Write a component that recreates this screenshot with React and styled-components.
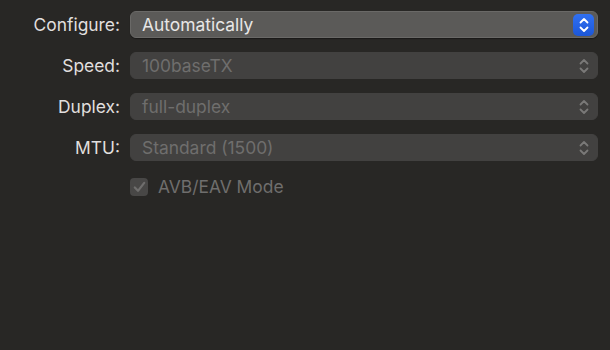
import React from "react";
import styled, { createGlobalStyle } from "styled-components";

const Global = createGlobalStyle`
  html, body { margin: 0; padding: 0; background: #282725; }
  body { width: 610px; height: 350px; overflow: hidden; font-family: Inter, "Liberation Sans", sans-serif; }
`;

const Page = styled.div`
  width: 610px;
  height: 350px;
  box-sizing: border-box;
  padding: 11px 12px 0 0;
  background: #282725;
`;

const Form = styled.div`
  display: grid;
  grid-template-columns: 120px 1fr;
  column-gap: 10px;
  row-gap: 14px;
  align-items: center;
`;

const Label = styled.div`
  text-align: right;
  font-size: 17.4px;
  color: #e0dfde;
  line-height: 27px;
  white-space: nowrap;
`;

const Popup = styled.div`
  height: 27px;
  box-sizing: border-box;
  border-radius: 6px;
  display: flex;
  align-items: center;
  padding: 0 3px 0 11px;
  font-size: 17.4px;
  background: ${p => (p.$enabled ? "#5b5a58" : "#424140")};
  border: 1px solid ${p => (p.$enabled ? "#6a6967" : "#424140")};
  color: ${p => (p.$enabled ? "#e8e7e6" : "#6f6e6d")};
  box-shadow: ${p => (p.$enabled ? "0 1px 1px rgba(0,0,0,0.35)" : "none")};
`;

const Value = styled.span`
  flex: 1;
  white-space: nowrap;
`;

const Stepper = styled.div`
  width: 21px;
  height: 22px;
  border-radius: 5px;
  display: flex;
  align-items: center;
  justify-content: center;
  background: ${p => (p.$enabled ? "linear-gradient(#3070f2, #1c57d8)" : "transparent")};
  color: ${p => (p.$enabled ? "#ffffff" : "#7a7978")};
`;

const CheckRow = styled.div`
  grid-column: 2;
  display: flex;
  align-items: center;
  gap: 10px;
  margin-top: 1px;
  font-size: 17.4px;
  color: #6f6e6d;
`;

const Box = styled.div`
  width: 18px;
  height: 18px;
  border-radius: 4px;
  background: #484746;
  display: flex;
  align-items: center;
  justify-content: center;
`;

const Chevrons = () => (
  <svg width="10" height="16" viewBox="0 0 10 16" fill="none" stroke="currentColor" strokeWidth="1.8" strokeLinecap="round" strokeLinejoin="round">
    <path d="M1.5 5.5 L5 2 L8.5 5.5" />
    <path d="M1.5 10.5 L5 14 L8.5 10.5" />
  </svg>
);

const Check = () => (
  <svg width="13" height="12" viewBox="0 0 13 12" fill="none" stroke="#6f6e6d" strokeWidth="2.2" strokeLinecap="round" strokeLinejoin="round">
    <path d="M1.8 6.5 L5 9.8 L11.2 1.8" />
  </svg>
);

const rows = [
  { label: "Configure:", value: "Automatically", enabled: true },
  { label: "Speed:", value: "100baseTX" },
  { label: "Duplex:", value: "full-duplex" },
  { label: "MTU:", value: "Standard (1500)" },
];

export default function App() {
  return (
    <>
      <Global />
      <Page>
        <Form>
          {rows.map(r => (
            <React.Fragment key={r.label}>
              <Label>{r.label}</Label>
              <Popup $enabled={r.enabled}>
                <Value>{r.value}</Value>
                <Stepper $enabled={r.enabled}>
                  <Chevrons />
                </Stepper>
              </Popup>
            </React.Fragment>
          ))}
          <CheckRow>
            <Box><Check /></Box>
            AVB/EAV Mode
          </CheckRow>
        </Form>
      </Page>
    </>
  );
}
